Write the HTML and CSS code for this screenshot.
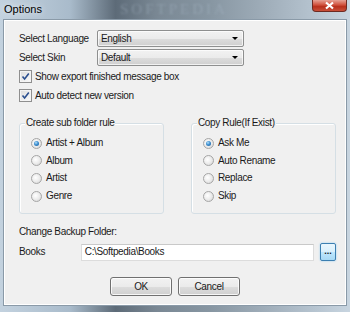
FILE: index.html
```html
<!DOCTYPE html>
<html lang="en">
<head>
    <meta charset="UTF-8">
    <title>Options</title>
    <link rel="stylesheet" href="styles.css">
</head>
<body>
    <div class="window">
        <div class="titlebar">
            <span class="title">Options</span>
            <span class="watermark">SOFTPEDIA</span>
            <div class="close-btn">
                <svg width="11" height="9" viewBox="0 0 11 9"><path d="M2 1.5 L9 7.5 M9 1.5 L2 7.5" stroke="#fff" stroke-width="2.2"/></svg>
            </div>
        </div>

        <div class="client">
            <div class="field-row">
                <label class="field-label">Select Language</label>
                <div class="combo"><span>English</span><i class="arrow"></i></div>
            </div>
            <div class="field-row">
                <label class="field-label">Select Skin</label>
                <div class="combo"><span>Default</span><i class="arrow"></i></div>
            </div>

            <div class="check-row first">
                <span class="checkbox"><svg width="9" height="9" viewBox="0 0 9 9"><path d="M1.5 4.5 L3.6 7 L7.8 1.5" fill="none" stroke="#2b4f8f" stroke-width="1.6"/></svg></span>
                <span>Show export finished message box</span>
            </div>
            <div class="check-row">
                <span class="checkbox"><svg width="9" height="9" viewBox="0 0 9 9"><path d="M1.5 4.5 L3.6 7 L7.8 1.5" fill="none" stroke="#2b4f8f" stroke-width="1.6"/></svg></span>
                <span>Auto detect new version</span>
            </div>

            <div class="groups">
                <div class="group">
                    <span class="group-title">Create sub folder rule</span>
                    <div class="radio-row"><span class="radio checked"></span>Artist + Album</div>
                    <div class="radio-row"><span class="radio"></span>Album</div>
                    <div class="radio-row"><span class="radio"></span>Artist</div>
                    <div class="radio-row"><span class="radio"></span>Genre</div>
                </div>
                <div class="group">
                    <span class="group-title">Copy Rule(If Exist)</span>
                    <div class="radio-row"><span class="radio checked"></span>Ask Me</div>
                    <div class="radio-row"><span class="radio"></span>Auto Rename</div>
                    <div class="radio-row"><span class="radio"></span>Replace</div>
                    <div class="radio-row"><span class="radio"></span>Skip</div>
                </div>
            </div>

            <div class="backup-title">Change Backup Folder:</div>
            <div class="backup-row">
                <span class="backup-label">Books</span>
                <div class="path-box">C:\Softpedia\Books</div>
                <div class="browse-btn">...</div>
            </div>

            <div class="buttons">
                <div class="btn">OK</div>
                <div class="btn">Cancel</div>
            </div>
        </div>
    </div>
</body>
</html>
```

FILE: styles.css
```css
* {
    margin: 0;
    padding: 0;
    box-sizing: border-box;
}

body {
    width: 350px;
    height: 312px;
    overflow: hidden;
    font-family: 'Liberation Sans', Arial, sans-serif;
    font-size: 10px;
    letter-spacing: -0.35px;
    line-height: 12px;
    color: #1a1a1a;
}

.window {
    width: 350px;
    height: 312px;
    background: linear-gradient(90deg, #c3d2df 0%, #a9bbcb 20%, #5d6b78 33%, #7a8894 45%, #8796a2 60%, #9eacb8 75%, #b6c4d0 90%, #c8d5e0 100%);
    display: flex;
    flex-direction: column;
}

.titlebar {
    position: relative;
    height: 19px;
    display: flex;
    align-items: center;
    padding-left: 4px;
}

.title {
    font-size: 11px;
    letter-spacing: 0;
    color: #000;
    text-shadow: 0 0 6px rgba(255,255,255,0.9);
    margin-top: -2px;
}

.watermark {
    position: absolute;
    left: 120px;
    top: 1px;
    font-family: 'Liberation Serif', serif;
    font-size: 15px;
    line-height: 16px;
    letter-spacing: 3px;
    color: rgba(170,185,200,0.4);
    filter: blur(1px);
}

.close-btn {
    position: absolute;
    right: 3px;
    top: 0;
    width: 35px;
    height: 12px;
    border: 1px solid #6e2a22;
    border-top: none;
    border-radius: 0 0 4px 4px;
    background: linear-gradient(#e6a194 0%, #d0503c 45%, #b8301c 60%, #c9503a 100%);
    display: flex;
    align-items: center;
    justify-content: center;
}

.client {
    flex: 1;
    margin: 0 3px 6px 3px;
    background: #f0f0f0;
    border: 1px solid #8a9aa8;
    box-shadow: inset 0 0 0 1px #fff;
    padding: 10px 10px 0 15px;
    display: flex;
    flex-direction: column;
}

.field-row {
    display: flex;
    align-items: center;
    height: 17px;
    margin-bottom: 2px;
}

.field-label {
    width: 78px;
}

.combo {
    width: 147px;
    height: 17px;
    border: 1px solid #8e8f8f;
    border-radius: 2px;
    background: linear-gradient(#f2f2f2 0%, #ebebeb 50%, #dddddd 51%, #cfcfcf 100%);
    display: flex;
    align-items: center;
    justify-content: space-between;
    padding: 0 5px 0 3px;
    box-shadow: inset 0 0 0 1px rgba(255,255,255,0.7);
}

.arrow {
    width: 0;
    height: 0;
    border-left: 3px solid transparent;
    border-right: 3px solid transparent;
    border-top: 3px solid #000;
}

.check-row {
    display: flex;
    align-items: center;
    gap: 3px;
    height: 13px;
    margin-bottom: 6px;
}

.check-row.first {
    margin-top: 2px;
}

.checkbox {
    width: 13px;
    height: 13px;
    border: 1px solid #8f8f8f;
    background: linear-gradient(135deg, #dcdcdc, #fbfbfb);
    box-shadow: inset 0 0 0 1px #f4f4f4;
    display: flex;
    align-items: center;
    justify-content: center;
}

.groups {
    display: flex;
    gap: 27px;
    margin-top: 15px;
}

.group {
    position: relative;
    width: 145px;
    height: 91px;
    border: 1px solid #d5dfe5;
    border-radius: 3px;
    padding: 13px 0 0 11px;
    box-shadow: 1px 1px 0 #fff inset;
}

.group-title {
    position: absolute;
    left: 5px;
    top: -7px;
    padding: 0 1px;
    background: #f0f0f0;
}

.radio-row {
    display: flex;
    align-items: center;
    gap: 4px;
    height: 12px;
    margin-bottom: 5.7px;
}

.radio {
    width: 11px;
    height: 11px;
    border-radius: 50%;
    border: 1px solid #a6a6a6;
    background: radial-gradient(circle at 40% 40%, #ffffff 0%, #ececec 50%, #d0d0d0 100%);
    display: flex;
    align-items: center;
    justify-content: center;
}

.radio.checked::after {
    content: "";
    width: 5px;
    height: 5px;
    border-radius: 50%;
    background: radial-gradient(circle at 40% 35%, #b5e2fb 0%, #3d8ed0 45%, #1c5a94 100%);
}

.backup-title {
    margin-top: 12px;
    height: 12px;
}

.backup-row {
    display: flex;
    align-items: center;
    margin-top: 5px;
    height: 18px;
}

.backup-label {
    width: 62px;
}

.path-box {
    width: 234px;
    height: 17px;
    border: 1px solid #dcdcdc;
    border-top-color: #c9c9c9;
    background: #fff;
    padding: 1px 3px;
    display: flex;
    align-items: center;
}

.browse-btn {
    width: 16px;
    height: 18px;
    margin-left: 6px;
    border: 1px solid #3c7fb1;
    border-radius: 2px;
    background: linear-gradient(#eaf6fd 0%, #d9f0fc 50%, #bee6fd 51%, #a7d9f5 100%);
    box-shadow: 0 0 2px #8ccaf0;
    font-size: 9px;
    font-weight: bold;
    letter-spacing: 0;
    line-height: 14px;
    text-align: center;
}

.buttons {
    display: flex;
    justify-content: center;
    gap: 6px;
    margin-top: 16px;
    padding-right: 5px;
}

.btn {
    width: 62px;
    height: 19px;
    border: 1px solid #707070;
    border-radius: 3px;
    background: linear-gradient(#f2f2f2 0%, #ebebeb 50%, #dddddd 51%, #cfcfcf 100%);
    box-shadow: inset 0 0 0 1px rgba(255,255,255,0.8);
    display: flex;
    align-items: center;
    justify-content: center;
}
```
